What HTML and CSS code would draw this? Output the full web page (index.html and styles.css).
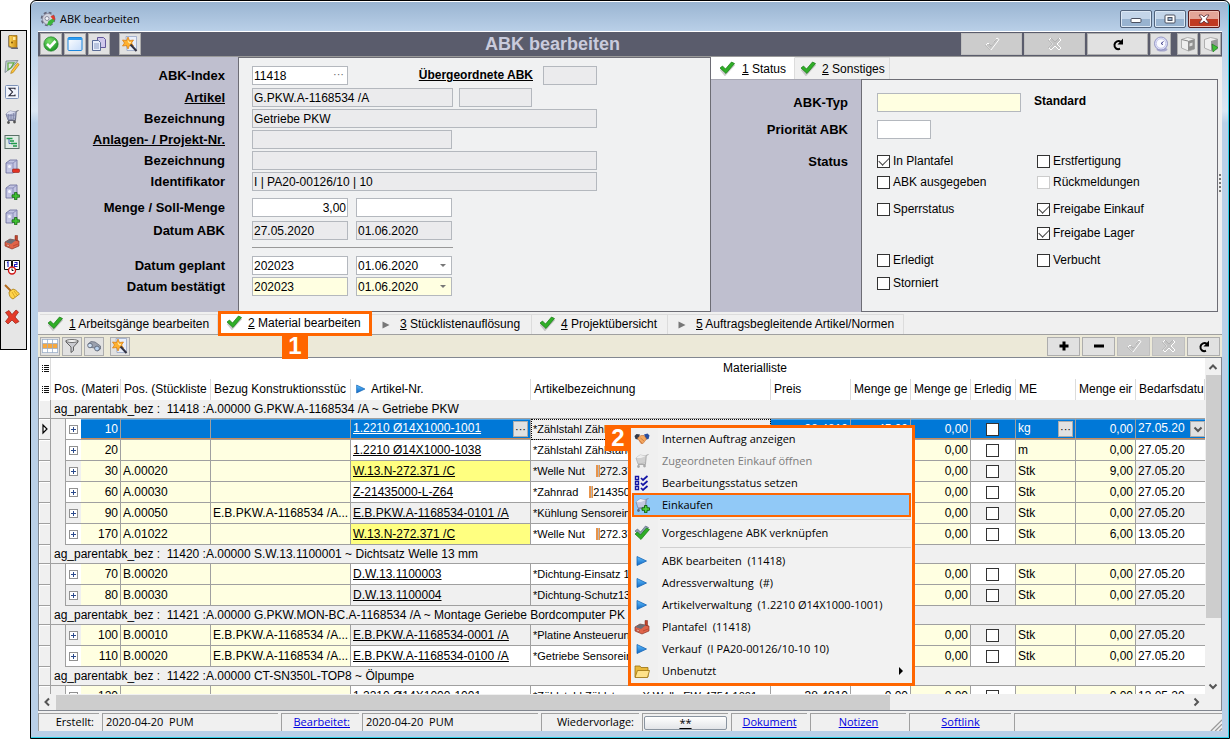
FILE: index.html
```html
<!DOCTYPE html>
<html lang="de">
<head>
<meta charset="utf-8">
<title>ABK bearbeiten</title>
<link rel="stylesheet" href="styles.css">
</head>
<body>
<svg class="defs" aria-hidden="true">
  <defs>
    <linearGradient id="gGold" x1="0" x2="1"><stop offset="0" stop-color="#ffd75a"/><stop offset="1" stop-color="#c98a10"/></linearGradient>
    <linearGradient id="gBlue" x1="0" y1="0" x2="0" y2="1"><stop offset="0" stop-color="#5fc0ff"/><stop offset="1" stop-color="#0f66c4"/></linearGradient>
    <linearGradient id="gPane" x1="0" y1="0" x2="1" y2="1"><stop offset="0" stop-color="#fff"/><stop offset="1" stop-color="#c6dcfa"/></linearGradient>
    <radialGradient id="gGreen" cx=".4" cy=".3" r=".8"><stop offset="0" stop-color="#7be06a"/><stop offset="1" stop-color="#0f8a1e"/></radialGradient>
  </defs>
  <symbol id="check" viewBox="0 0 16 16"><path d="M2 9l4 5 9-10" fill="none" stroke="#999" stroke-width="3" opacity=".5"/><path d="M1 8l2.500-2 3 3 6-7 3 1.500-8.500 10z" fill="#2fae27" stroke="#187a14" stroke-width=".7"/></symbol>
  <symbol id="ok" viewBox="0 0 16 16"><circle cx="8" cy="8" r="7.200" fill="url(#gGreen)" stroke="#1a7a22" stroke-width=".6"/><path d="M4 8l3 3 5.500-6" fill="none" stroke="#fff" stroke-width="2.600"/></symbol>
  <symbol id="win" viewBox="0 0 16 16"><rect x="1" y="1.500" width="14" height="13" rx="1" fill="url(#gPane)" stroke="#1c86dc"/><path d="M1 3h14" stroke="#2e9cf0" stroke-width="2"/></symbol>
  <symbol id="docs" viewBox="0 0 16 16"><path d="M6.500 1.500h6l2 2v8h-8z" fill="#cfc8ec" stroke="#63589b"/><path d="M1.500 4.500h6l2 2v8h-8z" fill="#e8eefb" stroke="#5a6c97"/><path d="M3 8h5M3 10h5M3 12h5" stroke="#8a9cc4"/></symbol>
  <symbol id="wizard" viewBox="0 0 16 16"><path d="M4 .5h10.500v14H5z" fill="#e9effb" stroke="#8b9cc0" stroke-width=".7"/><path d="M6 1l1.500 3.500L11.500 4 9.500 7l2 3-4-.500L6 13 4.500 9.500.5 10l2-3-2-3 4 .500z" fill="#ffb02e" stroke="#d87a0c" stroke-width=".7"/><path d="M6 4.500l.7 2 2-.2-1 1.200" fill="none" stroke="#fff0b0"/><path d="M8.500 8.500l6 6.500" stroke="#334" stroke-width="2"/></symbol>
  <symbol id="gear" viewBox="0 0 16 16"><circle cx="8" cy="8" r="6" fill="#b9bccb" stroke="#63667a" stroke-width="2.600" stroke-dasharray="2.700 2"/><circle cx="8" cy="8" r="5.500" fill="#d3d5e0" stroke="#8a8da2" stroke-width=".8"/><circle cx="7" cy="7.500" r="2" fill="#f4f5fa" stroke="#777a8e" stroke-width=".8"/><path d="M7 14l1.500-4 5-3 1 3-4 4.500z" fill="#3cb43c"/><path d="M10.500 5.500l3-1.500 2 4-2 1z" fill="#e03a2c"/></symbol>
  <symbol id="door" viewBox="0 0 16 16"><path d="M4 2l4-1v14l-4-2z" fill="#8a8d99"/><path d="M5 1.500h8v12H8l-3-1.500z" fill="url(#gGold)" stroke="#95690c" stroke-width=".7"/><rect x="9" y="3" width="2.500" height="3" fill="#ffe99c"/><circle cx="8" cy="8.500" r=".9" fill="#754a00"/><path d="M7 15h7v-1.500H8z" fill="#667"/></symbol>
  <symbol id="ruler" viewBox="0 0 16 16"><path d="M2 2l12-.5-5 6-8 6z" fill="#c8d2d8" stroke="#75828c" stroke-width=".8"/><path d="M4 4l6-.2-3 5-3 2z" fill="#dfe6e4" stroke="#5faa3f" stroke-width="1.200"/><path d="M13.500 4l1.700 1.500-6 8-2.500 1 .8-2.500z" fill="#ffc437" stroke="#a3730c" stroke-width=".6"/></symbol>
  <symbol id="sigma" viewBox="0 0 16 16"><rect x="1.500" y="1.500" width="13" height="13" rx="1" fill="#f1f4fb" stroke="#7d92b8"/><path d="M11 5.500V4.200H5l3.500 3.800L5 11.800h6v-1.300" fill="none" stroke="#223" stroke-width="1.100"/></symbol>
  <symbol id="cart" viewBox="0 0 16 16"><path d="M14.500 1.500l-2.500 1-.5 9H4" fill="none" stroke="#666a7d"/><path d="M2 5l4-3 6 1-.5 7L4 11z" fill="#aeb4cf" stroke="#62678a" stroke-width=".7"/><path d="M7 2.500v8M4.500 4v6.500M9.500 3v7M2.500 7l9-1" stroke="#7c82a6" stroke-width=".7"/><path d="M2 5l4-3 6 1-5 2z" fill="#dcdff0"/><circle cx="4.500" cy="13.500" r="1.400" fill="#555"/><circle cx="10.500" cy="13" r="1.400" fill="#555"/></symbol>
  <symbol id="cartgray" viewBox="0 0 16 16"><path d="M14.500 1.500l-2.500 1-.5 9H4" fill="none" stroke="#aaa"/><path d="M2 5l4-3 6 1-.5 7L4 11z" fill="#d0d0d0" stroke="#aaa" stroke-width=".7"/><path d="M2 5l4-3 6 1-5 2z" fill="#eee"/><circle cx="4.500" cy="13.500" r="1.400" fill="#aaa"/><circle cx="10.500" cy="13" r="1.400" fill="#aaa"/></symbol>
  <symbol id="cartplus" viewBox="0 0 16 16"><path d="M14.500 1.500l-2.500 1-.5 9H4" fill="none" stroke="#888ca0"/><path d="M2 5l4-3 6 1-.5 7L4 11z" fill="#c4c8e0" stroke="#777c9c" stroke-width=".7"/><path d="M2 5l4-3 6 1-5 2z" fill="#eceef8"/><circle cx="4.500" cy="13.500" r="1.400" fill="#667"/><path d="M10.500 8.500h2.500v2.300h2.500v2.500H13v2.400h-2.500v-2.400H8v-2.500h2.500z" fill="#4fd03f" stroke="#0d5a0a" stroke-width=".9"/></symbol>
  <symbol id="gantt" viewBox="0 0 16 16"><rect x="1" y="1.500" width="14" height="13" fill="#dfeae4" stroke="#5a7068"/><path d="M2.500 4.500h6M6 7h4M7 9.500h6M9 12h4" stroke="#1f9b4b" stroke-width="1.500"/><path d="M5 5v4.500h2" fill="none" stroke="#2a4bb0" stroke-width=".8"/></symbol>
  <symbol id="boxminus" viewBox="0 0 16 16"><path d="M2 4l4-3h7v10l-4 3H2z" fill="#c2c4e2" stroke="#646897" stroke-width=".8"/><path d="M2 4h7v10M9 4l4-3" fill="none" stroke="#8184b4" stroke-width=".8"/><circle cx="5.500" cy="7.500" r="1.500" fill="#f5f6ff"/><rect x="8.500" y="10" width="7" height="3.500" rx="1" fill="#e23324" stroke="#911a10" stroke-width=".6"/></symbol>
  <symbol id="boxplus" viewBox="0 0 16 16"><path d="M2 4l4-3h7v10l-4 3H2z" fill="#c2c4e2" stroke="#646897" stroke-width=".8"/><path d="M2 4h7v10M9 4l4-3" fill="none" stroke="#8184b4" stroke-width=".8"/><circle cx="5.500" cy="7.500" r="1.500" fill="#f5f6ff"/><path d="M10.500 8.500h2.500v2.300h2.500v2.500H13v2.400h-2.500v-2.400H8v-2.500h2.500z" fill="#3fc032" stroke="#0d5a0a" stroke-width=".7"/></symbol>
  <symbol id="factory" viewBox="0 0 16 16"><path d="M11 6V1.500h2.500V9z" fill="#c2452e" stroke="#7a2416" stroke-width=".5"/><path d="M1 8l5-3 9 2v5l-7 3-7-3z" fill="#e0644a" stroke="#7a2416" stroke-width=".6"/><path d="M1 8l5-3 6 1-5 4z" fill="#6c6f78"/><path d="M3 10v2l2 .8v-2zM9 12l5-2" fill="#ffe0d0" stroke="#a33a26" stroke-width=".6"/></symbol>
  <symbol id="calclock" viewBox="0 0 16 16"><path d="M.5 1.500h7v9h-7zM8.500 1.500h7v9h-7z" fill="#fff" stroke="#111"/><path d="M3 3.500l1-.5v5M10.500 3.500h2.500v2h-2.500v2h3" fill="none" stroke="#1818c0" stroke-width="1.100"/><circle cx="8" cy="11.500" r="3.500" fill="#fff" stroke="#d01818" stroke-width="1.400"/><path d="M8 9.500v2h1.500" stroke="#111" fill="none"/></symbol>
  <symbol id="broom" viewBox="0 0 16 16"><path d="M1 1l6 6" stroke="#b36a1c" stroke-width="2"/><path d="M5 8l4-3c4 1 5 4 6.500 5L9 15c-3-1-4-4-4-7z" fill="#ffd34a" stroke="#a87c0e" stroke-width=".8"/><path d="M8 8l3 5M10 7l3 4" stroke="#c8961a" stroke-width=".7"/></symbol>
  <symbol id="redx" viewBox="0 0 16 16"><path d="M1.500 3.500l3.500-2 3 4 4-4.500 2.500 2L11 8l4 4.500-3.500 2L8 11l-4 4-2.500-2.500L5 8z" fill="#e53b29" stroke="#971c10" stroke-width=".7"/></symbol>
  <symbol id="tblcols" viewBox="0 0 16 16"><rect x="0" y="1" width="16" height="14" fill="#fff"/><rect x="0" y="5.500" width="16" height="5" fill="#f7a83e"/><path d="M0 1.500h16M0 5.500h16M0 10.500h16M0 14.500h16M.5 1v14M5.500 1v14M10.500 1v14M15.500 1v14" stroke="#9db0c8" stroke-width=".8"/></symbol>
  <symbol id="funnel" viewBox="0 0 16 16"><path d="M2 2.500h12v1.500L9.500 9v3.500L7 14.500V9L2 4z" fill="#c9cacf" stroke="#555" stroke-width=".9"/><ellipse cx="8" cy="3" rx="6" ry="1.500" fill="#f2f2f2" stroke="#555" stroke-width=".8"/></symbol>
  <symbol id="bino" viewBox="0 0 16 16"><path d="M2 6l3-2.500 4 .5 5.500 4v3l-3 2-3-3-5.500-1z" fill="#9aa0ad" stroke="#5e6474" stroke-width=".7"/><circle cx="4" cy="7.500" r="2.300" fill="#cfe0f3" stroke="#545c6c" stroke-width=".8"/><circle cx="11" cy="10.500" r="2.400" fill="#b9d2ee" stroke="#545c6c" stroke-width=".8"/></symbol>
  <symbol id="cktick" viewBox="0 0 16 16"><path d="M2 9l2-2 3 3 6-8 2 1.500-8 10.500z" fill="#c4c4c4" stroke="#fff" stroke-width="1"/><path d="M1.500 9l5 5M5 8l2 2 5.500-7" fill="none" stroke="#a0a0a0" stroke-width=".8"/></symbol>
  <symbol id="ckx" viewBox="0 0 16 16"><path d="M2 4l2-2 4 4 4-4 2 2-4 4 4 4-2 2-4-4-4 4-2-2 4-4z" fill="#c4c4c4" stroke="#fff" stroke-width="1"/><path d="M1.500 4l4 4-4 4M4 2l4 4 4-4" fill="none" stroke="#a0a0a0" stroke-width=".8"/></symbol>
  <symbol id="redo" viewBox="0 0 16 16"><path d="M10 12.800c-3 1.200-6-1-5.500-4.300.5-3 4-4.500 6.500-2.500" fill="none" stroke="#000" stroke-width="2"/><path d="M13 2.500v6H7.500z"/></symbol>
  <symbol id="clock" viewBox="0 0 16 16"><ellipse cx="9" cy="13.500" rx="5.500" ry="2" fill="#a6a7cc"/><circle cx="8" cy="7.500" r="6.500" fill="#dcdef8" stroke="#8487bb" stroke-width=".8"/><circle cx="8" cy="7.500" r="4.700" fill="#fafaff" stroke="#b9bbdf" stroke-width=".7"/><path d="M8 7.500l2.500-2M8 7.500l2 1" stroke="#3a3a8a"/></symbol>
  <symbol id="book" viewBox="0 0 16 16"><path d="M1.500 3.500l6-2 7 1.500v10l-6 2-7-3z" fill="#efefef" stroke="#a0a0a0" stroke-width=".8"/><path d="M8 5l6.500-2v10L8 15z" fill="#8f8f8f"/><path d="M9.500 7.500l3-1v3l-3 1z" fill="#ddd"/><path d="M1.500 3.500L8 5" stroke="#888"/></symbol>
  <symbol id="bookgo" viewBox="0 0 16 16"><path d="M1.500 3.500l6-2 7 1.500v10l-6 2-7-3z" fill="#efefef" stroke="#a0a0a0" stroke-width=".8"/><path d="M8 5l6.500-2v10L8 15z" fill="#9a9a9a"/><path d="M9 8l6 3.500-5 4.500z" fill="#3fbf35" stroke="#17741a" stroke-width=".6"/></symbol>
  <symbol id="tri" viewBox="0 0 16 16"><path d="M3 3.500v9L12.500 8z" fill="url(#gBlue)" stroke="#1565b5" stroke-width=".8"/></symbol>
  <symbol id="trigray" viewBox="0 0 16 16"><path d="M4 4v8l8-4z" fill="#777"/></symbol>
  <symbol id="hands" viewBox="0 0 16 16"><path d="M.5 5l2-2 3.500.5-2 5-2.500-.5z" fill="#333a48"/><path d="M15.500 4.500l-2-2-3.500 1 2 5 2.500-.5z" fill="#2a4fa0"/><path d="M3.500 7L7 4.500h3L12.500 8 9 12.500H7z" fill="#f4a860" stroke="#c06a30" stroke-width=".6"/><path d="M6.500 7l3.500 3M5 9l3 3" stroke="#c8703a" stroke-width=".7"/></symbol>
  <symbol id="status" viewBox="0 0 16 16"><path d="M1.500 1.500h3v3h-3zM1.500 6.500h3v3h-3zM1.500 11.500h3v3h-3z" fill="#fff" stroke="#1515a5" stroke-width="1.400"/><path d="M7 3l2 2 4.500-4M7 8l2 2 4.500-4M7 13l2 2 4.500-4" fill="none" stroke="#1515a5" stroke-width="1.700"/></symbol>
  <symbol id="dblcheck" viewBox="0 0 16 16"><path d="M1 6l2.500-2 3 3 5-6 3 1.500-8 9z" fill="#8b9bb0" stroke="#4f5e74" stroke-width=".6"/><path d="M1 9l2.500-2 3 3 6-7 3 1.500-8.500 10z" fill="#2fae27" stroke="#187a14" stroke-width=".7"/></symbol>
  <symbol id="folder" viewBox="0 0 16 16"><path d="M1 4.500V3h5l1 1.500h7v9.500H1z" fill="#e8b83a" stroke="#9a7210" stroke-width=".8"/><path d="M3.500 7.500h12L13.500 14.500H1z" fill="#ffe28a" stroke="#9a7210" stroke-width=".8"/></symbol>
  <symbol id="list" viewBox="0 0 8 10"><path d="M0 1.500h1M2 1.500h5M0 3.500h1M2 3.500h5M0 5.500h1M2 5.500h5M0 7.500h1M2 7.500h5" stroke="#111"/></symbol>
  <symbol id="up" viewBox="0 0 10 10"><path d="M1.500 7L5 3.500 8.500 7" fill="none" stroke="#555" stroke-width="2"/></symbol>
  <symbol id="down" viewBox="0 0 10 10"><path d="M1.500 3.500L5 7l3.500-3.500" fill="none" stroke="#555" stroke-width="2"/></symbol>
  <symbol id="left" viewBox="0 0 10 10"><path d="M7 1.500L3.500 5 7 8.500" fill="none" stroke="#555" stroke-width="2"/></symbol>
  <symbol id="right" viewBox="0 0 10 10"><path d="M3.500 1.500L7 5 3.500 8.500" fill="none" stroke="#555" stroke-width="2"/></symbol>
  <symbol id="current" viewBox="0 0 8 12"><path d="M2 2v8l4-4z" fill="#fff" stroke="#000" stroke-width="1.200"/></symbol>
</svg>

<nav class="rail" aria-label="Werkzeuge">
  <button><svg><use href="#door"/></svg></button>
  <button><svg><use href="#ruler"/></svg></button>
  <button><svg><use href="#sigma"/></svg></button>
  <button><svg><use href="#cart"/></svg></button>
  <button><svg><use href="#gantt"/></svg></button>
  <button><svg><use href="#boxminus"/></svg></button>
  <button><svg><use href="#boxplus"/></svg></button>
  <button><svg><use href="#boxplus"/></svg></button>
  <button><svg><use href="#factory"/></svg></button>
  <button><svg><use href="#calclock"/></svg></button>
  <button><svg><use href="#broom"/></svg></button>
  <button><svg><use href="#redx"/></svg></button>
</nav>

<div class="window">
  <header class="titlebar">
    <svg class="i16"><use href="#gear"/></svg>
    <span class="caption">ABK bearbeiten</span>
    <div class="winbtns">
      <button class="wb" aria-label="Minimieren"><svg viewBox="0 0 12 12"><rect x="1" y="5.500" width="10" height="4" rx="1" fill="#fff" stroke="#4a5060"/></svg></button>
      <button class="wb" aria-label="Maximieren"><svg viewBox="0 0 12 12"><rect x="1" y="2" width="10" height="8" rx="1" fill="#fff" stroke="#4a5060"/><rect x="4" y="4.500" width="4" height="3" fill="#9bb5d2" stroke="#4a5060"/></svg></button>
      <button class="wb close" aria-label="Schließen"><svg viewBox="0 0 12 12"><path d="M1 2h3l2 2 2-2h3L8 6l3 4H8L6 8l-2 2H1l3-4z" fill="#fff" stroke="#5a3038" stroke-width=".8"/></svg></button>
    </div>
  </header>

  <div class="topbar">
    <div class="group">
      <button class="tb"><svg><use href="#ok"/></svg></button>
      <button class="tb"><svg><use href="#win"/></svg></button>
      <button class="tb"><svg><use href="#docs"/></svg></button>
      <button class="tb apart"><svg><use href="#wizard"/></svg></button>
    </div>
    <h1>ABK bearbeiten</h1>
    <div class="group end">
      <button class="tb wide" disabled><svg><use href="#cktick"/></svg></button>
      <button class="tb wide" disabled><svg><use href="#ckx"/></svg></button>
      <button class="tb wide"><svg><use href="#redo"/></svg></button>
      <button class="tb"><svg><use href="#clock"/></svg></button>
      <button class="tb spaced"><svg><use href="#book"/></svg></button>
      <button class="tb"><svg><use href="#bookgo"/></svg></button>
    </div>
  </div>

  <div class="forms">
    <form class="pane main">
      <div class="labels">
        <label class="row" for="idx">ABK-Index</label>
        <label class="row g3" for="art"><u>Artikel</u></label>
        <label class="row g2" for="bez">Bezeichnung</label>
        <label class="row g2" for="prj"><u>Anlagen- / Projekt-Nr.</u></label>
        <label class="row g2" for="bez2">Bezeichnung</label>
        <label class="row g2" for="ident">Identifikator</label>
        <label class="row g7" for="menge">Menge / Soll-Menge</label>
        <label class="row g4" for="datum">Datum ABK</label>
        <label class="row g16" for="plan">Datum geplant</label>
        <label class="row g2" for="best">Datum bestätigt</label>
      </div>
      <div class="fields">
        <div class="row"><span class="combo w96"><input id="idx" value="11418"><i class="dots">···</i></span><label class="sub" for="ueber"><u>Übergeordnete ABK</u></label><input id="ueber" class="ro w54" readonly></div>
        <div class="row g3"><input id="art" class="ro w201" value="G.PKW.A-1168534 /A" readonly><input class="ro w73" aria-label="Artikelzusatz" readonly></div>
        <div class="row g2"><input id="bez" class="ro w345" value="Getriebe PKW" readonly></div>
        <div class="row g2"><input id="prj" class="ro w200" readonly></div>
        <div class="row g2"><input id="bez2" class="ro w345" readonly></div>
        <div class="row g2"><input id="ident" class="ro w345" value="I | PA20-00126/10 | 10" readonly></div>
        <div class="row g7"><input id="menge" class="w96 num" value="3,00"><input class="w96" aria-label="Soll-Menge"></div>
        <div class="row g4"><input id="datum" class="ro w96" value="27.05.2020" readonly><input class="ro w96" aria-label="Datum ABK bis" value="01.06.2020" readonly></div>
        <div class="rule"></div>
        <div class="row g8"><input id="plan" class="w96" value="202023"><span class="combo arrow w96"><select aria-label="Datum geplant"><option>01.06.2020</option></select></span></div>
        <div class="row g2"><input id="best" class="w96 yellow" value="202023"><span class="combo arrow w96"><select class="yellow" aria-label="Datum bestätigt"><option>01.06.2020</option></select></span></div>
      </div>
    </form>

    <div class="side">
      <div class="tabs upper">
        <button class="tab on"><svg><use href="#check"/></svg><span><u>1</u> Status</span></button>
        <button class="tab"><svg><use href="#check"/></svg><span><u>2</u> Sonstiges</span></button>
      </div>
      <form class="pane status">
        <div class="labels">
          <label class="row" for="typ">ABK-Typ</label>
          <label class="row g8" for="prio">Priorität ABK</label>
          <span class="row g13">Status</span>
        </div>
        <div class="fields">
          <div class="row"><input id="typ" class="yellow w144"><b class="std">Standard</b></div>
          <div class="row g8"><input id="prio" class="w54"></div>
          <div class="row g13"><label class="ck"><input type="checkbox" checked>In Plantafel</label><label class="ck"><input type="checkbox">Erstfertigung</label></div>
          <div class="row g2"><label class="ck"><input type="checkbox">ABK ausgegeben</label><label class="ck"><input type="checkbox" disabled>Rückmeldungen</label></div>
          <div class="row g8"><label class="ck"><input type="checkbox">Sperrstatus</label><label class="ck"><input type="checkbox" checked>Freigabe Einkauf</label></div>
          <div class="row g5"><span class="ck"></span><label class="ck"><input type="checkbox" checked>Freigabe Lager</label></div>
          <div class="row g8"><label class="ck"><input type="checkbox">Erledigt</label><label class="ck"><input type="checkbox">Verbucht</label></div>
          <div class="row g4"><label class="ck"><input type="checkbox">Storniert</label></div>
        </div>
      </form>
    </div>
    <div class="splitter"></div>
  </div>

  <div class="tabs lower">
    <button class="tab t178"><svg><use href="#check"/></svg><span><u>1</u> Arbeitsgänge bearbeiten</span></button>
    <button class="tab on marked t154"><svg><use href="#check"/></svg><span><u>2</u> Material bearbeiten</span><b class="badge one">1</b></button>
    <button class="tab t160"><svg class="small"><use href="#trigray"/></svg><span><u>3</u> Stücklistenauflösung</span></button>
    <button class="tab t136"><svg><use href="#check"/></svg><span><u>4</u> Projektübersicht</span></button>
    <button class="tab t236"><svg class="small"><use href="#trigray"/></svg><span><u>5</u> Auftragsbegleitende Artikel/Normen</span></button>
  </div>

  <div class="gridbar">
    <div class="group">
      <button class="tb"><svg><use href="#tblcols"/></svg></button>
      <button class="tb"><svg><use href="#funnel"/></svg></button>
      <button class="tb"><svg><use href="#bino"/></svg></button>
      <button class="tb spaced"><svg><use href="#wizard"/></svg></button>
    </div>
    <div class="group end">
      <button class="tb mid"><svg viewBox="0 0 16 16"><path d="M8 3.500v9M3.500 8h9" stroke="#000" stroke-width="3"/></svg></button>
      <button class="tb mid"><svg viewBox="0 0 16 16"><path d="M3 8h10" stroke="#000" stroke-width="3"/></svg></button>
      <button class="tb mid" disabled><svg><use href="#cktick"/></svg></button>
      <button class="tb mid" disabled><svg><use href="#ckx"/></svg></button>
      <button class="tb mid"><svg><use href="#redo"/></svg></button>
    </div>
  </div>

  <div class="grid">
    <div class="view">
      <table>
        <colgroup><col class="c12"><col class="c15"><col class="c15"><col class="c40"><col class="c90"><col class="c140"><col class="c180"><col class="c240"><col class="c80"><col class="c60"><col class="c60"><col class="c45"><col class="c60"><col class="c60"><col></colgroup>
        <thead>
          <tr class="band"><td><svg><use href="#list"/></svg></td><th colspan="14">Materialliste</th></tr>
          <tr><td><svg><use href="#list"/></svg></td><th colspan="3">Pos. (Materi</th><th>Pos. (Stückliste</th><th>Bezug Konstruktionsstüc</th><th><svg class="sort"><use href="#tri"/></svg>Artikel-Nr.</th><th>Artikelbezeichnung</th><th>Preis</th><th>Menge ge</th><th>Menge ge</th><th>Erledig</th><th>ME</th><th>Menge eir</th><th>Bedarfsdatu</th></tr>
        </thead>
        <tbody>
          <tr class="grp"><td></td><th colspan="14">ag_parentabk_bez :&nbsp; 11418 :A.00000 G.PKW.A-1168534 /A ~ Getriebe PKW</th></tr>
          <tr class="sel"><td><svg class="cur"><use href="#current"/></svg></td><td></td><td><button class="exp" aria-label="Aufklappen"></button></td><td>10</td><td></td><td></td><td><a href="#">1.2210 Ø14X1000-1001</a><button class="more">···</button></td><td>*Zählstahl Zählstang</td><td>38,4810</td><td>45,00</td><td>0,00</td><td><input type="checkbox" aria-label="Erledigt"></td><td>kg<button class="more">···</button></td><td>0,00</td><td>27.05.20<button class="more pick" aria-label="Datum wählen"><svg><use href="#down"/></svg></button></td></tr>
          <tr><td></td><td></td><td><button class="exp" aria-label="Aufklappen"></button></td><td>20</td><td></td><td></td><td><a href="#">1.2210 Ø14X1000-1038</a></td><td>*Zählstahl Zählstang</td><td></td><td></td><td>0,00</td><td><input type="checkbox" aria-label="Erledigt"></td><td>m</td><td>0,00</td><td>27.05.20</td></tr>
          <tr class="alt hot"><td></td><td></td><td><button class="exp" aria-label="Aufklappen"></button></td><td>30</td><td>A.00020</td><td></td><td><a href="#">W.13.N-272.371 /C</a></td><td>*Welle Nut<i class="bar"></i>272.37</td><td></td><td></td><td>0,00</td><td><input type="checkbox" aria-label="Erledigt"></td><td>Stk</td><td>9,00</td><td>27.05.20</td></tr>
          <tr><td></td><td></td><td><button class="exp" aria-label="Aufklappen"></button></td><td>60</td><td>A.00030</td><td></td><td><a href="#">Z-21435000-L-Z64</a></td><td>*Zahnrad<i class="bar"></i>214350</td><td></td><td></td><td>0,00</td><td><input type="checkbox" aria-label="Erledigt"></td><td>Stk</td><td>0,00</td><td>27.05.20</td></tr>
          <tr class="alt"><td></td><td></td><td><button class="exp" aria-label="Aufklappen"></button></td><td>90</td><td>A.00050</td><td>E.B.PKW.A-1168534 /A...</td><td><a href="#">E.B.PKW.A-1168534-0101 /A</a></td><td>*Kühlung Sensorein</td><td></td><td></td><td>0,00</td><td><input type="checkbox" aria-label="Erledigt"></td><td>Stk</td><td>0,00</td><td>27.05.20</td></tr>
          <tr class="hot"><td></td><td></td><td><button class="exp" aria-label="Aufklappen"></button></td><td>170</td><td>A.01022</td><td></td><td><a href="#">W.13.N-272.371 /C</a></td><td>*Welle Nut<i class="bar"></i>272.37</td><td></td><td></td><td>0,00</td><td><input type="checkbox" aria-label="Erledigt"></td><td>Stk</td><td>6,00</td><td>13.05.20</td></tr>
          <tr class="grp"><td></td><th colspan="14">ag_parentabk_bez :&nbsp; 11420 :A.00000 S.W.13.1100001 ~ Dichtsatz Welle 13 mm</th></tr>
          <tr><td></td><td></td><td><button class="exp" aria-label="Aufklappen"></button></td><td>70</td><td>B.00020</td><td></td><td><a href="#">D.W.13.1100003</a></td><td>*Dichtung-Einsatz 13</td><td></td><td></td><td>0,00</td><td><input type="checkbox" aria-label="Erledigt"></td><td>Stk</td><td>0,00</td><td>27.05.20</td></tr>
          <tr class="alt"><td></td><td></td><td><button class="exp" aria-label="Aufklappen"></button></td><td>80</td><td>B.00030</td><td></td><td><a href="#">D.W.13.1100004</a></td><td>*Dichtung-Schutz13</td><td></td><td></td><td>0,00</td><td><input type="checkbox" aria-label="Erledigt"></td><td>Stk</td><td>0,00</td><td>27.05.20</td></tr>
          <tr class="grp"><td></td><th colspan="14">ag_parentabk_bez :&nbsp; 11421 :A.00000 G.PKW.MON-BC.A-1168534 /A ~ Montage Geriebe Bordcomputer PK</th></tr>
          <tr class="alt"><td></td><td></td><td><button class="exp" aria-label="Aufklappen"></button></td><td>100</td><td>B.00010</td><td>E.B.PKW.A-1168534 /A...</td><td><a href="#">E.B.PKW.A-1168534-0001 /A</a></td><td>*Platine Ansteuerun</td><td></td><td></td><td>0,00</td><td><input type="checkbox" aria-label="Erledigt"></td><td>Stk</td><td>0,00</td><td>27.05.20</td></tr>
          <tr><td></td><td></td><td><button class="exp" aria-label="Aufklappen"></button></td><td>110</td><td>B.00020</td><td>E.B.PKW.A-1168534 /A...</td><td><a href="#">E.B.PKW.A-1168534-0100 /A</a></td><td>*Getriebe Sensorein</td><td></td><td></td><td>0,00</td><td><input type="checkbox" aria-label="Erledigt"></td><td>Stk</td><td>0,00</td><td>27.05.20</td></tr>
          <tr class="grp"><td></td><th colspan="14">ag_parentabk_bez :&nbsp; 11422 :A.00000 CT-SN350L-TOP8 ~ Ölpumpe</th></tr>
          <tr><td></td><td></td><td><button class="exp" aria-label="Aufklappen"></button></td><td>120</td><td></td><td></td><td><a href="#">1.2210 Ø14X1000-1001</a></td><td>*Zählstahl Zählstange X Welle EW-4754-1001</td><td>38,4810</td><td>0,00</td><td>0,00</td><td><input type="checkbox" aria-label="Erledigt"></td><td></td><td>0,00</td><td>13.05.20</td></tr>
        </tbody>
      </table>
    </div>
    <div class="vscroll"><svg><use href="#up"/></svg><div class="thumb"></div><svg><use href="#down"/></svg></div>
    <div class="hscroll"><svg><use href="#left"/></svg><div class="thumb"></div><svg><use href="#right"/></svg></div>
    <div class="corner"></div>
  </div>

  <footer class="statusbar">
    <span class="s61 r">Erstellt:</span>
    <span class="s176">2020-04-20&nbsp; PUM</span>
    <span class="s78 r"><a href="#">Bearbeitet:</a></span>
    <span class="s176">2020-04-20&nbsp; PUM</span>
    <span class="s98 r">Wiedervorlage:</span>
    <span class="s86 flush"><button><u>**</u></button></span>
    <span class="s76 c"><a href="#">Dokument</a></span>
    <span class="s96 c"><a href="#">Notizen</a></span>
    <span class="s102 c"><a href="#">Softlink</a></span>
    <span class="fill"><svg class="grip" viewBox="0 0 14 14"><path d="M1 14L14 1M6 14l8-8M11 14l3-3" stroke="#999" stroke-width="1.500"/></svg></span>
  </footer>

  <div class="menu" role="menu">
    <b class="badge two">2</b>
    <button role="menuitem"><svg><use href="#hands"/></svg>Internen Auftrag anzeigen</button>
    <button role="menuitem" disabled><svg><use href="#cartgray"/></svg>Zugeordneten Einkauf öffnen</button>
    <button role="menuitem"><svg><use href="#status"/></svg>Bearbeitungsstatus setzen</button>
    <button role="menuitem" class="hover"><svg><use href="#cartplus"/></svg>Einkaufen</button>
    <hr>
    <button role="menuitem"><svg><use href="#dblcheck"/></svg>Vorgeschlagene ABK verknüpfen</button>
    <hr>
    <button role="menuitem"><svg><use href="#tri"/></svg>ABK bearbeiten&nbsp; (11418)</button>
    <button role="menuitem"><svg><use href="#tri"/></svg>Adressverwaltung&nbsp; (#)</button>
    <button role="menuitem"><svg><use href="#tri"/></svg>Artikelverwaltung&nbsp; (1.2210 Ø14X1000-1001)</button>
    <button role="menuitem"><svg><use href="#factory"/></svg>Plantafel&nbsp; (11418)</button>
    <button role="menuitem"><svg><use href="#tri"/></svg>Verkauf&nbsp; (I PA20-00126/10-10 10)</button>
    <button role="menuitem"><svg><use href="#folder"/></svg>Unbenutzt<svg class="subarrow" viewBox="0 0 8 8"><path d="M2 0v8l4-4z"/></svg></button>
  </div>
</div>
</body>
</html>
```
FILE: styles.css
```css
* { box-sizing: border-box; }
body {
  margin: 0;
  height: 100vh;
  display: flex;
  align-items: flex-start;
  gap: 3px;
  background: #fff;
  color: #000;
  font: 12px/15px "Liberation Sans", Arial, sans-serif;
  overflow: hidden;
}
button, input, select { font: inherit; color: inherit; margin: 0; padding: 0; border-radius: 0; }
button { border: 0; background: none; }
.defs { position: absolute; width: 0; height: 0; }
svg { width: 16px; height: 16px; flex: none; display: block; }

/* Tool rail */
.rail {
  flex: none;
  width: 27px;
  margin-top: 30px;
  padding-bottom: 18px;
  border: 1px solid #000;
  background: #e6e6e6;
  display: flex;
  flex-direction: column;
}
.rail button { height: 25px; padding: 0 0 4px 3px; }

/* Window frame */
.window {
  flex: 1;
  min-width: 0;
  height: 100%;
  position: relative;
  display: flex;
  flex-direction: column;
  padding: 0 7px;
  padding-bottom: 7px;
  background: linear-gradient(#99b4d1, #bad0e8 31px, #dbe6f3 110px, #bad0e8 122px);
  border: 1px solid #000;
  border-radius: 6px 6px 0 0;
  box-shadow: inset -1px -1px 0 #2fd0e8, inset 0 1px 0 #fff;
}
.titlebar {
  height: 31px;
  flex: none;
  display: flex;
  align-items: center;
  gap: 4px;
  padding: 6px 2px 0 2px;
  border-bottom: 1px solid #fff;
  font: 11px/16px "Open Sans", "Noto Sans", sans-serif;
}
.winbtns { margin-left: auto; display: flex; gap: 2px; }
.wb {
  width: 32px;
  height: 18px;
  display: grid;
  place-items: center;
  border: 1px solid #51637c;
  border-radius: 2px;
  box-shadow: inset 0 0 0 1px #dce8f5;
  background: linear-gradient(#c3d5e9 50%, #98b3d0 50%);
}
.wb svg { width: 12px; height: 12px; }
.wb.close { background: linear-gradient(#e3a597 50%, #c03a22 50%); border-color: #5a1a1a; box-shadow: inset 0 0 0 1px #f0c0b4; }

.topbar {
  height: 25px;
  flex: none;
  display: grid;
  grid-template-columns: 1fr auto auto;
  align-items: center;
  padding: 0 1px 0 2px;
  background: #5a5c6c;
  border-bottom: 1px solid #999;
}
.topbar h1 { margin: 0; padding-right: 341px; font-size: 18px; line-height: 22px; color: #c9cbdc; }
.group { display: flex; gap: 2px; }
.group.end { margin-left: auto; }
.tb {
  width: 22px;
  height: 22px;
  display: grid;
  place-items: center;
  background: #e1e1e1;
  border: 1px solid #adadad;
}
.tb:disabled { background: #ccc; border-color: #bfbfbf; }
.topbar .end .tb { width: 21px; }
.topbar .end .wide { width: 61px; }
.topbar .apart { margin-left: 7px; }
.spaced { margin-left: 4px; }

/* Forms */
.forms { flex: none; display: flex; background: #f0f0f0; }
.pane { display: flex; background: #bfbfcf; }
.labels { padding: 9px 13px 0 0; text-align: right; font-weight: bold; font-size: 13px; }
.main { width: 673px; flex: none; }
.main .labels { width: 200px; flex: none; }
.fields { flex: 1; background: #f0f1f2; border: 1px solid #6d6d75; }
.main .fields { padding: 8px 0 15px 13px; }
.row { display: flex; align-items: center; height: 19px; gap: 8px; white-space: nowrap; }
.labels .row { justify-content: flex-end; }
.g2 { margin-top: 2px; } .g3 { margin-top: 3px; } .g4 { margin-top: 4px; } .g5 { margin-top: 5px; } .g7 { margin-top: 7px; }
.g8 { margin-top: 8px; } .g13 { margin-top: 13px; } .g16 { margin-top: 16px; }
.row input:not([type]), .row select {
  height: 19px;
  padding: 0 1px;
  border: 1px solid #b4b8be;
  background: #fff;
  outline: 0;
}
.row input.ro { background: #ebebed; }
.row .yellow.yellow { background: #ffffe1; }
.row .num { text-align: right; }
.row select { width: 100%; appearance: none; padding-top: 1px; }
.w54 { width: 54px; } .w73 { width: 73px; } .w96 { width: 96px; } .w144 { width: 144px; }
.w200 { width: 200px; } .w201 { width: 201px; } .w345 { width: 345px; }
.combo { position: relative; display: block; height: 19px; }
.combo input { width: 100%; }
.dots { position: absolute; right: 4px; top: 1px; font-style: normal; font-size: 11px; color: #666; }
.arrow::after { content: ""; position: absolute; right: 6px; top: 8px; border: 3px solid transparent; border-top-color: #777; border-bottom: 0; }
.sub { width: 177px; text-align: right; font-weight: bold; }
.row .sub + input { margin-left: 2px; }
.rule { width: 201px; height: 1px; margin-top: 7px; background: #999; }
.main .fields .g3 { gap: 6px; }

.side { flex: 1; min-width: 0; display: flex; flex-direction: column; }
.tabs { display: flex; background: #f0f0f0; }
.tab {
  display: flex;
  align-items: center;
  gap: 6px;
  padding: 0 4px 0 7px;
  border: solid #dcdcdc;
  border-width: 1px 1px 0 0;
  white-space: nowrap;
}
.tab.on { background: #fff; border-top-color: #fff; }
.upper { height: 22px; align-items: stretch; }
.upper .tab { padding: 2px 4px 0 5px; gap: 6px; }
.upper .tab.on { padding: 2px 8px 0 8px; gap: 7px; }
.tab svg { margin-top: -3px; }
.tab svg.small { width: 14px; height: 14px; margin: 0; }
.status { flex: 1; }
.status .labels { width: 150px; flex: none; padding-top: 13px; border-top: 1px solid #a8a8b4; }
.status .fields { padding: 13px 0 0 15px; }
.std { margin-left: 5px; padding-bottom: 2px; }
.ck { width: 152px; display: flex; align-items: center; gap: 3px; }
input[type="checkbox"] {
  appearance: none;
  width: 13px;
  height: 13px;
  flex: none;
  display: grid;
  place-items: center;
  border: 1px solid #333;
  background: #fff;
}
input[type="checkbox"]:disabled { border-color: #ccc; }
input[type="checkbox"]:checked::after {
  content: "";
  width: 9px;
  height: 5px;
  margin-bottom: 3px;
  border: solid #444;
  border-width: 0 0 1px 1px;
  transform: rotate(-45deg);
}
.splitter { width: 4px; flex: none; background: repeating-linear-gradient(#777 0 2px, #f0f0f0 2px 4px) 1px 117px / 2px 18px no-repeat, #f0f0f0; }

.lower { flex: none; height: 23px; padding: 2px 0 0 2px; border-bottom: 1px solid #a0a0a0; }
.t136 { width: 136px; } .t154 { width: 154px; } .t160 { width: 160px; } .t178 { width: 178px; } .t236 { width: 236px; }
.lower .tab svg.small { margin-right: 1px; }
.marked.tab { position: relative; z-index: 1; margin: -3px 0 -2px; border: 3px solid #ff6600; padding: 0 5px; }
.badge {
  position: absolute;
  width: 26px;
  height: 26px;
  background: #ff6600;
  color: #fff;
  font: bold 24px/26px "Liberation Sans", Arial, sans-serif;
  text-align: center;
}
.one { left: 61px; top: 19px; }

.gridbar { flex: none; height: 22px; display: flex; align-items: center; padding: 0 2px; background: #ece9d8; }
.gridbar .tb { width: 20px; height: 19px; }
.gridbar .mid.tb { width: 33px; }

/* Material grid */
.grid {
  flex: 1;
  min-height: 0;
  display: grid;
  grid-template: minmax(0, 1fr) 16px / minmax(0, 1fr) 16px;
  border: 1px solid #828790;
  background: #fff;
}
.view { overflow: hidden; }
table { width: 100%; table-layout: fixed; border-spacing: 0; }
.c12 { width: 12px; } .c15 { width: 15px; } .c40 { width: 40px; } .c45 { width: 45px; } .c60 { width: 60px; } .c80 { width: 80px; }
.c90 { width: 90px; } .c140 { width: 140px; } .c180 { width: 180px; } .c240 { width: 240px; }
th, td { padding: 0; height: 21px; font-weight: normal; text-align: left; white-space: nowrap; overflow: hidden; }
thead th { padding-left: 3px; border-right: 1px solid #dcdcdc; }
thead td { border-right: 1px solid #dcdcdc; }
thead td svg { width: 8px; height: 10px; margin-left: 3px; }
.band th { text-align: center; padding-left: 254px; border: 0; }
.sort { display: inline-block; width: 14px; height: 14px; vertical-align: -3px; margin: 0 3px 0 0; }
tbody td { border: solid #a0a0a0; border-width: 0 1px 1px 0; padding: 0 2px; }
tbody td:first-child { background: #f0f0f0; padding: 0 0 0 2px; box-shadow: inset 1px 1px 0 #fff; }
tbody td:nth-child(2) { background: #f0f0f0; border-bottom: 0; }
tbody td:nth-child(3) { border-right: 0; padding: 0 0 0 3px; }
tbody td:nth-child(n+4):nth-child(-n+6), tbody td:nth-child(11), tbody td:nth-child(13), tbody td:nth-child(14) { background: #ffffe1; }
tbody td:nth-child(4), tbody td:nth-child(9), tbody td:nth-child(10), tbody td:nth-child(11), tbody td:nth-child(14) { text-align: right; }
tbody td:nth-child(8) { font-size: 11px; }
tbody td:nth-child(12) input { margin-left: 13px; }
tbody td:last-child { border-right: 0; }
.alt { background: #f0f0f0; }
.grp th { height: 19px; padding-left: 3px; background: #f0f0f0; border-bottom: 1px solid #a0a0a0; }
.grp td { height: 19px; }
tbody tr.hot td:nth-child(7) { background: #ffff80; }
tbody tr.sel td:nth-child(n+4) { background: #0078d7; color: #fff; box-shadow: inset 0 1px 0 #4ba2e6, inset 0 -1px 0 #c98a5a; }
tbody tr.sel td:nth-child(8) { background: #f0f0f0; color: #000; outline: 1px dotted #000; outline-offset: -1px; box-shadow: none; }
td a { color: inherit; }
.exp {
  width: 9px;
  height: 9px;
  display: block;
  border: 1px solid #919191;
  background:
    linear-gradient(#2b4a8c, #2b4a8c) center / 5px 1px no-repeat,
    linear-gradient(#2b4a8c, #2b4a8c) center / 1px 5px no-repeat,
    #fff;
}
.more { float: right; width: 15px; height: 16px; background: #e1e1e1; border: 1px solid #adadad; color: #000; font-size: 11px; line-height: 12px; }
.pick { margin-right: -2px; display: grid; place-items: center; }
.pick svg { width: 10px; height: 10px; }
.bar { display: inline-block; width: 4px; height: 12px; margin: 0 0 0 11px; vertical-align: -2px; border: solid #e8944a; border-width: 0 1px 0 2px; background: #b8b8b8; }
.cur { width: 8px; height: 12px; }
.vscroll, .hscroll { display: flex; background: #f0f0f0; align-items: center; }
.vscroll { flex-direction: column; padding: 4px 0 3px; gap: 3px; }
.vscroll svg, .hscroll svg { width: 10px; height: 10px; }
.vscroll .thumb { width: 15px; flex: none; height: 74%; background: #cdcdcd; }
.vscroll .thumb + svg { margin-top: auto; }
.hscroll { padding: 0 4px 0 3px; gap: 4px; }
.hscroll .thumb { height: 15px; width: 72%; flex: none; background: #cdcdcd; }
.hscroll .thumb + svg { margin-left: auto; }
.corner { background: #f0f0f0; }

/* Status bar */
.statusbar {
  flex: none;
  display: flex;
  gap: 3px;
  padding-top: 2px;
  background: #f0f0f0;
  font: 11px/16px "Open Sans", "Noto Sans", sans-serif;
}
.statusbar span { height: 18px; flex: none; padding: 0 3px; border: solid #a0a0a0; border-width: 1px 0 0 1px; white-space: nowrap; }
.statusbar a { color: #0000e0; }
.s61 { width: 61px; } .s76 { width: 76px; } .s78 { width: 78px; } .s86 { width: 86px; } .s96 { width: 96px; }
.s98 { width: 98px; } .s102 { width: 102px; } .s176 { width: 176px; }
.statusbar .r { text-align: right; padding-right: 5px; }
.statusbar .s78 { padding-right: 9px; }
.statusbar .c { text-align: center; }
.statusbar .flush { padding: 1px; }
.flush button { width: 100%; height: 14px; border: 1px solid #8a94a0; border-radius: 2px; line-height: 12px; background: linear-gradient(#fff, #e2e4e8); }
.statusbar .fill { flex: 1; display: flex; justify-content: flex-end; align-items: flex-end; padding: 0; }
.grip { width: 12px; height: 12px; }

/* Context menu */
.menu {
  position: absolute;
  left: 597px;
  top: 424px;
  width: 287px;
  padding: 0 1px 1px;
  background: linear-gradient(90deg, #f0f0f0 27px, #f2f2f2 27px);
  border: 3px solid #ff6600;
  z-index: 2;
  font: 11px/16px "Open Sans", "Noto Sans", sans-serif;
}
.menu button { display: flex; align-items: center; gap: 12px; width: 100%; height: 22px; padding: 0 6px 0 2px; white-space: nowrap; }
.menu button:disabled { color: #7d7d7d; }
.menu .hover { height: 24px; margin: -1px 0; padding-left: 0; background: #91c9f7; border: 2px solid #ff6600; }
.menu hr { height: 1px; margin: 3px 0 2px 28px; border: 0; background: #d0d0d0; }
.menu .subarrow { width: 8px; height: 8px; margin-left: auto; }
.two { left: -26px; top: -3px; }
```
